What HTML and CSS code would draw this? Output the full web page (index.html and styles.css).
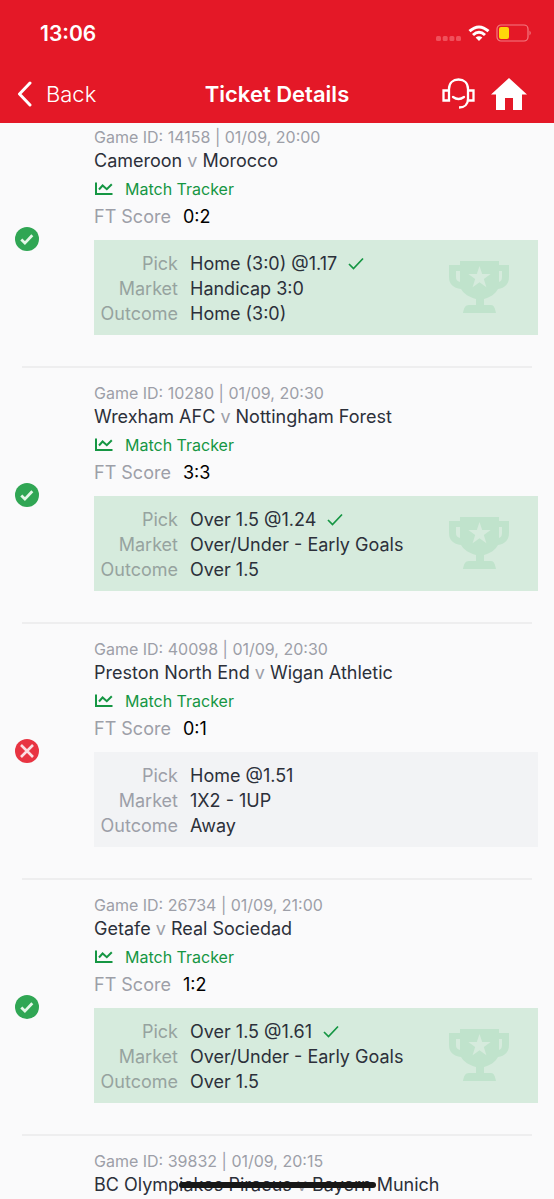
FILE: index.html
```html
<!DOCTYPE html>
<html lang="en">
<head>
<meta charset="utf-8">
<meta name="viewport" content="width=device-width, initial-scale=1">
<title>Ticket Details</title>
<link rel="stylesheet" href="styles.css">
</head>
<body>
<svg class="defs" aria-hidden="true">
  <symbol id="won" viewBox="0 0 24 24"><circle cx="12" cy="12" r="12" fill="#30a654"/><path d="M6.300 12.500l3.600 3.600 7.400-7.800" fill="none" stroke="#e4f7e8" stroke-width="2.800"/></symbol>
  <symbol id="lost" viewBox="0 0 24 24"><circle cx="12" cy="12" r="12" fill="#e83442"/><path d="M6 6l12 12M18 6L6 18" fill="none" stroke="#fbdfe3" stroke-width="2.600"/></symbol>
  <symbol id="chart" viewBox="0 0 19 14"><path d="M2 .5V12h16.500M5 7.500l3.600-4 4.200 3.700 5-5" fill="none" stroke="currentColor" stroke-width="2"/></symbol>
  <symbol id="tick" viewBox="0 0 16 14"><path d="M1 7l4.500 4.500L15 1.500" fill="none" stroke="currentColor" stroke-width="1.700"/></symbol>
  <symbol id="trophy" viewBox="0 0 60 52"><path fill="currentColor" fill-rule="evenodd" d="M11 0h39v4h10v12c0 7-4 11-11 12-3 5-7 8-14 10v6h7c3 0 4 3 5 8H14c1-5 2-8 6-8h7v-6c-7-2-12-5-15-10C4 27 0 23 0 16V4h11zM7 10v6c0 3 1 4 4 5V10zM50 10v11c2-1 3-2 3-5v-6zM30.500 5l-2.700 8h-8.500l6.900 5-2.600 8.200 6.900-5 6.900 5-2.600-8.200 6.900-5h-8.500z"/></symbol>
</svg>
<div class="app">
  <header class="header">
    <div class="status">
      <time>13:06</time>
      <div class="status-icons">
        <svg class="signal" viewBox="0 0 26 6"><g fill="#f0505b"><rect x="0" y="1" width="5" height="5" rx="1.500"/><rect x="6.700" y="1" width="5" height="5" rx="1.500"/><rect x="13.400" y="1" width="5" height="5" rx="1.500"/><rect x="20" y="1" width="5" height="5" rx="1.500"/></g></svg>
        <svg class="wifi" viewBox="0 0 22 16"><g fill="none" stroke="#fff" stroke-width="3"><path d="M1.500 6.200Q11-2.300 20.500 6.200"/><path d="M5 10Q11 4.500 17 10"/></g><path d="M7.600 12.600Q11 9.900 14.400 12.600L11 16z" fill="#fff"/></svg>
        <svg class="battery" viewBox="0 0 36 18"><rect x="1" y="1" width="31" height="16" rx="4" fill="none" stroke="#f37b83" stroke-width="1.200"/><rect x="3" y="3" width="10" height="12" rx="2" fill="#ffd60a"/><path d="M33.500 6.500q2.500 2.500 0 5z" fill="#f37b83"/></svg>
      </div>
    </div>
    <nav class="nav">
      <button class="back" type="button"><svg class="chevron" viewBox="0 0 16 26"><path d="M14 2L3.500 13 14 24" fill="none" stroke="#fff" stroke-width="3" stroke-linecap="round" stroke-linejoin="round"/></svg>Back</button>
      <h1>Ticket Details</h1>
      <div class="actions">
        <button type="button" aria-label="Support"><svg class="support" viewBox="0 0 33 32"><g fill="none" stroke="#fff" stroke-width="2.300"><path d="M1.500 12.500h5.500v10H1.500zM26 12.500h5.500v10H26zM7 13v-2C7 5 11 1.500 16.500 1.500S26 5 26 11v10c0 5-3.500 8.500-9 8.500"/><path d="M11 19q5.500 4 11 0" stroke-linecap="round"/></g></svg></button>
        <button type="button" aria-label="Home"><svg class="home" viewBox="0 0 36 32"><path d="M18 0L0 16.500h5V32h9V20h8v12h9V16.500h5z" fill="#fff"/></svg></button>
      </div>
    </nav>
  </header>
  <main class="games">
    <article class="game">
      <svg class="result" role="img" aria-label="Won"><use href="#won"/></svg>
      <div class="details">
        <p class="meta">Game ID: 14158 | 01/09, 20:00</p>
        <h2>Cameroon <span class="muted">v</span> Morocco</h2>
        <a class="tracker" href="#"><svg class="chart"><use href="#chart"/></svg>Match Tracker</a>
        <p class="score"><span class="muted">FT Score</span><b>0:2</b></p>
        <div class="bet won">
          <dl>
            <dt>Pick</dt><dd>Home (3:0) @1.17<svg class="tick"><use href="#tick"/></svg></dd>
            <dt>Market</dt><dd>Handicap 3:0</dd>
            <dt>Outcome</dt><dd>Home (3:0)</dd>
          </dl>
          <svg class="trophy"><use href="#trophy"/></svg>
        </div>
      </div>
    </article>
    <article class="game">
      <svg class="result" role="img" aria-label="Won"><use href="#won"/></svg>
      <div class="details">
        <p class="meta">Game ID: 10280 | 01/09, 20:30</p>
        <h2>Wrexham AFC <span class="muted">v</span> Nottingham Forest</h2>
        <a class="tracker" href="#"><svg class="chart"><use href="#chart"/></svg>Match Tracker</a>
        <p class="score"><span class="muted">FT Score</span><b>3:3</b></p>
        <div class="bet won">
          <dl>
            <dt>Pick</dt><dd>Over 1.5 @1.24<svg class="tick"><use href="#tick"/></svg></dd>
            <dt>Market</dt><dd>Over/Under - Early Goals</dd>
            <dt>Outcome</dt><dd>Over 1.5</dd>
          </dl>
          <svg class="trophy"><use href="#trophy"/></svg>
        </div>
      </div>
    </article>
    <article class="game">
      <svg class="result" role="img" aria-label="Lost"><use href="#lost"/></svg>
      <div class="details">
        <p class="meta">Game ID: 40098 | 01/09, 20:30</p>
        <h2>Preston North End <span class="muted">v</span> Wigan Athletic</h2>
        <a class="tracker" href="#"><svg class="chart"><use href="#chart"/></svg>Match Tracker</a>
        <p class="score"><span class="muted">FT Score</span><b>0:1</b></p>
        <div class="bet">
          <dl>
            <dt>Pick</dt><dd>Home @1.51</dd>
            <dt>Market</dt><dd>1X2 - 1UP</dd>
            <dt>Outcome</dt><dd>Away</dd>
          </dl>
        </div>
      </div>
    </article>
    <article class="game">
      <svg class="result" role="img" aria-label="Won"><use href="#won"/></svg>
      <div class="details">
        <p class="meta">Game ID: 26734 | 01/09, 21:00</p>
        <h2>Getafe <span class="muted">v</span> Real Sociedad</h2>
        <a class="tracker" href="#"><svg class="chart"><use href="#chart"/></svg>Match Tracker</a>
        <p class="score"><span class="muted">FT Score</span><b>1:2</b></p>
        <div class="bet won">
          <dl>
            <dt>Pick</dt><dd>Over 1.5 @1.61<svg class="tick"><use href="#tick"/></svg></dd>
            <dt>Market</dt><dd>Over/Under - Early Goals</dd>
            <dt>Outcome</dt><dd>Over 1.5</dd>
          </dl>
          <svg class="trophy"><use href="#trophy"/></svg>
        </div>
      </div>
    </article>
    <article class="game partial">
      <div class="details">
        <p class="meta">Game ID: 39832 | 01/09, 20:15</p>
        <h2>BC Olymp<span class="struck">iakos Piraeus <span class="muted">v</span> Bayern</span> Munich</h2>
      </div>
    </article>
  </main>
</div>
</body>
</html>
```

FILE: styles.css
```css
* { box-sizing: border-box; }
body, h1, h2, p, dl, dd { margin: 0; }
body {
  background: #fafafb;
  color: #2c303a;
  font-family: Inter, "Liberation Sans", sans-serif;
  font-size: 18px;
}
svg { display: block; flex: none; }
.defs { position: absolute; width: 0; height: 0; }
button {
  border: 0;
  padding: 0;
  background: none;
  color: inherit;
  font: inherit;
}
.app { height: 100vh; overflow: hidden; }

.header {
  position: relative;
  z-index: 1;
  background: #e41827;
  color: #fff;
}
.status {
  display: flex;
  align-items: center;
  justify-content: space-between;
  height: 64px;
  padding: 2px 22px 0 40px;
  font-size: 21px;
  font-weight: 600;
}
.status-icons { display: flex; align-items: center; gap: 6px; }
.signal { width: 26px; height: 6px; margin-top: 9px; }
.wifi { width: 22px; height: 16px; }
.battery { width: 36px; height: 18px; }
.nav {
  display: grid;
  grid-template-columns: 1fr auto 1fr;
  align-items: center;
  height: 59px;
  padding: 0 16px;
}
.back {
  display: flex;
  align-items: center;
  justify-self: start;
  gap: 14px;
  font-size: 22px;
  font-weight: 300;
}
.chevron { width: 16px; height: 26px; }
h1 { font-size: 22px; font-weight: 600; }
.actions {
  display: flex;
  align-items: center;
  justify-self: end;
  gap: 16px;
  margin-right: 11px;
}
.support { width: 33px; height: 32px; }
.home { width: 36px; height: 32px; }

.games { margin-top: -11px; }
.game {
  position: relative;
  display: flex;
  align-items: center;
  gap: 55px;
  padding: 14px 16px 33px 15px;
}
.game::after {
  content: "";
  position: absolute;
  right: 22px;
  bottom: 0;
  left: 22px;
  height: 2px;
  background: #eeeeef;
}
.result { width: 24px; height: 24px; margin-top: 17px; }
.details { flex: 1; min-width: 0; }
.meta { color: #9d9fa8; font-size: 16px; line-height: 22px; }
h2 { font-size: 18px; font-weight: 400; line-height: 26px; white-space: nowrap; }
.muted { color: #9d9fa8; }
.tracker {
  display: flex;
  align-items: center;
  gap: 12px;
  color: #159643;
  font-size: 16px;
  line-height: 30px;
  text-decoration: none;
}
.chart { width: 19px; height: 14px; }
.score { display: flex; gap: 12px; line-height: 26px; }
.score b { color: #000; font-weight: 400; }
.bet {
  display: flex;
  align-items: flex-start;
  justify-content: space-between;
  margin-top: 10px;
  padding: 11px 29px 9px 6px;
  background: #f2f3f5;
}
.won { background: #d6ebdd; }
dl {
  display: grid;
  grid-template-columns: 78px auto;
  column-gap: 12px;
  line-height: 25px;
}
dt { color: #9d9fa8; text-align: right; }
.won dt { color: #96a39f; }
dd { display: flex; align-items: center; gap: 11px; }
.tick { width: 16px; height: 14px; color: #159643; }
.trophy { width: 60px; height: 52px; margin-top: 10px; color: #c0e3cc; }
.partial { padding-left: 94px; }
.partial::after { content: none; }
.struck { position: relative; }
.struck::after {
  content: "";
  position: absolute;
  top: 8px;
  right: -4px;
  left: 0;
  height: 6px;
  border-radius: 3px;
  background: #171717;
}
```
